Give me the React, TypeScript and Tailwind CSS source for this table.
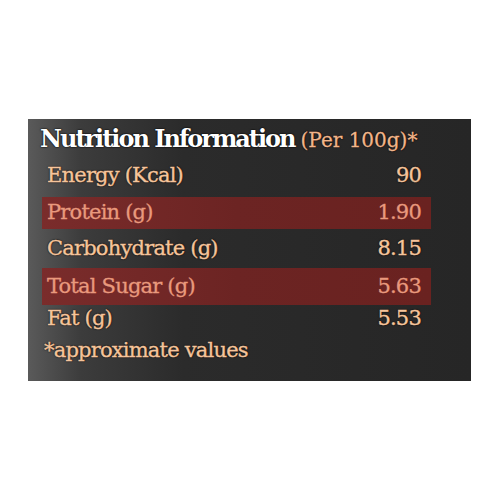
export default function App() {
  const rows = [
    { label: "Energy (Kcal)", value: "90", hl: false, h: "h-[42px]" },
    { label: "Protein (g)", value: "1.90", hl: true, h: "h-[32px]" },
    { label: "Carbohydrate (g)", value: "8.15", hl: false, h: "h-[39px]" },
    { label: "Total Sugar (g)", value: "5.63", hl: true, h: "h-[37px]" },
    { label: "Fat (g)", value: "5.53", hl: false, h: "h-[27px]" },
  ];
  return (
    <div className="w-[500px] h-[500px] bg-white pt-[119px] pl-[28px] font-['DejaVu_Serif',serif]">
      <div className="w-[443px] h-[262px] bg-[linear-gradient(90deg,#5a5a5a_0%,#3c3c3c_12%,#2b2b2b_35%,#262626_100%)] pl-[12px] pr-[40px] pt-[3px] flex flex-col">
        <div className="flex items-center h-[33px] whitespace-nowrap [text-shadow:0_0_2px_#000,0_0_1px_#000]">
          <div className="flex items-baseline">
            <span className="text-white font-bold text-[24px] tracking-[-2px]">Nutrition Information</span>
            <span className="text-[#f2b58a] text-[20px] ml-[6px] tracking-[0px] [-webkit-text-stroke:0.3px_#f2b58a]">(Per 100g)*</span>
          </div>
        </div>
        {rows.map((r) => (
          <div
            key={r.label}
            className={
              "flex items-center justify-between pl-[5px] pr-[10px] ml-[2px] text-[21px] tracking-[-0.8px] whitespace-nowrap " +
              r.h +
              " " +
              (r.hl
                ? "bg-[linear-gradient(90deg,#7a2c2b_0%,#6c2423_50%,#6a2220_100%)] text-[#e9997d] [-webkit-text-stroke:0.3px_#e9997d]"
                : "text-[#f5c49b] [-webkit-text-stroke:0.4px_#f5c49b] [text-shadow:0_0_2px_#000,0_0_1px_#000]")
            }
          >
            <span>{r.label}</span>
            <span>{r.value}</span>
          </div>
        ))}
        <div className="h-[37px] flex items-center pl-[4px] text-[21px] tracking-[-0.8px] text-[#f5c49b] [-webkit-text-stroke:0.4px_#f5c49b] [text-shadow:0_0_2px_#000,0_0_1px_#000] whitespace-nowrap">
          *approximate values
        </div>
      </div>
    </div>
  );
}
